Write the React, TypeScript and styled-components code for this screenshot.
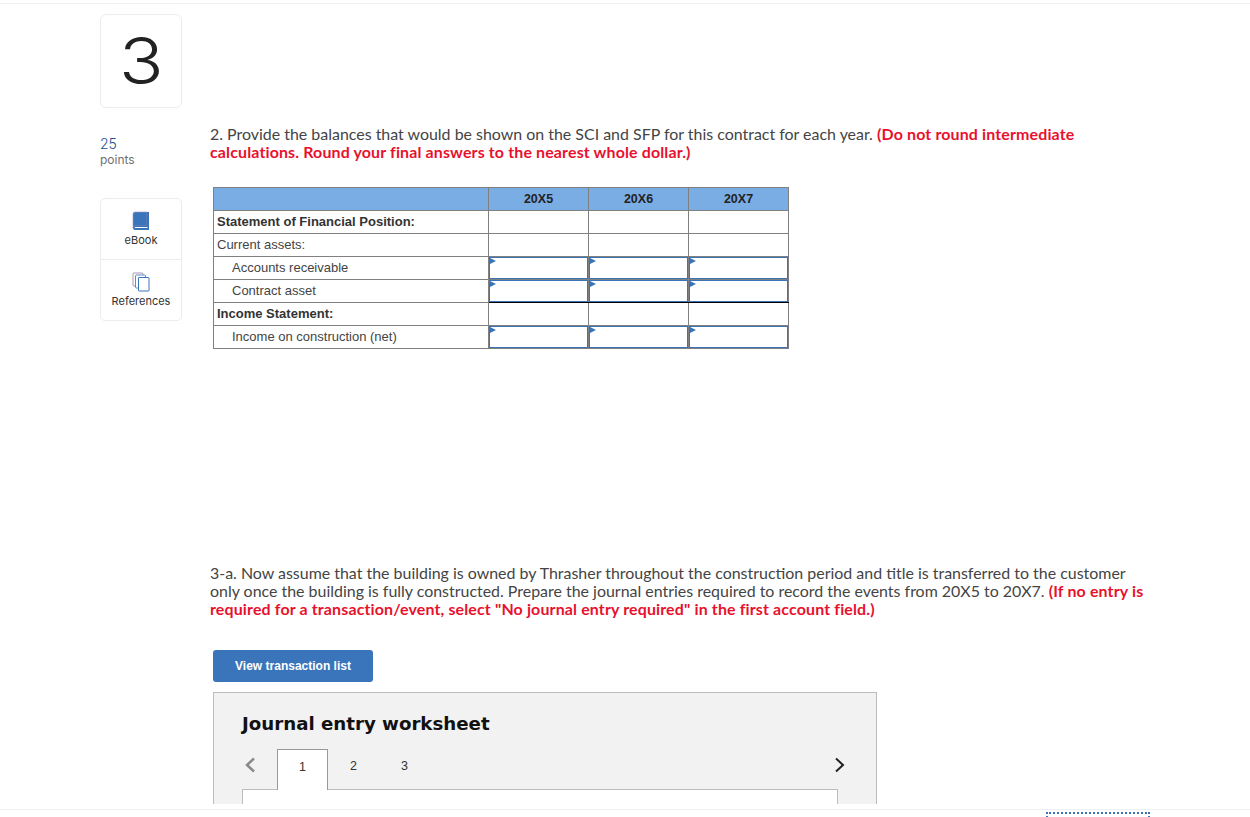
import styled, { createGlobalStyle } from "styled-components";

const GlobalStyle = createGlobalStyle`
  html, body {
    margin: 0;
    padding: 0;
    background: #fff;
    overflow: hidden;
  }
`;

const Page = styled.div`
  width: 1250px;
  height: 817px;
  display: flex;
  flex-direction: column;
  overflow: hidden;
  font-family: "Open Sans", sans-serif;
`;

const Main = styled.main`
  height: 800px;
  margin-top: 3px;
  border-top: 1px solid #f2f2f2;
  box-sizing: content-box;
  display: flex;
  padding-left: 100px;
  overflow: hidden;
`;

const Side = styled.aside`
  width: 82px;
  flex: none;
  padding-top: 10px;
`;

const NumberCard = styled.div`
  height: 90px;
  padding-bottom: 2px;
  border: 1px solid #ececec;
  border-radius: 6px;
  display: flex;
  align-items: center;
  justify-content: center;
  font-family: "Inter", sans-serif;
  font-weight: 300;
  font-size: 64px;
  color: #222;
`;

const NumberGlyph = styled.span`
  display: block;
  transform: scaleX(1.15);
`;

const Points = styled.div`
  margin-top: 28px;
  height: 34px;
  font-family: "Inter", sans-serif;
  font-size: 12px;
  line-height: 16px;
  color: #707070;
`;

const PointsValue = styled.div`
  font-size: 14px;
  font-weight: 300;
  color: #1f4e8c;
`;

const Tools = styled.div`
  margin-top: 28px;
  border: 1px solid #ececec;
  border-radius: 5px;
`;

const Tool = styled.div`
  height: 60px;
  display: flex;
  flex-direction: column;
  align-items: center;
  padding-top: 12px;
  box-sizing: border-box;
  font-family: "Inter", sans-serif;
  font-size: 11px;
  color: #333;
  & + & {
    height: 61px;
    border-top: 1px solid #ececec;
  }
  svg {
    display: block;
    margin-bottom: 2px;
  }
`;

const Content = styled.div`
  margin-left: 28px;
  width: 940px;
  padding-top: 121px;
`;

const Prompt = styled.p`
  margin: 0;
  font-family: "Lato", sans-serif;
  font-size: 15.95px;
  line-height: 18px;
  color: #444;
`;

const Strong = styled.strong`
  color: #e8112d;
  font-weight: 700;
  letter-spacing: 0.15px;
`;

const Inset = styled.div`
  margin-left: 3px;
`;

const Grid = styled.table`
  margin-top: 26px;
  width: 575px;
  table-layout: fixed;
  border-collapse: collapse;
  font-family: "Liberation Sans", sans-serif;
  color: #444;
`;

const HeadCell = styled.th`
  height: 22px;
  padding: 0;
  background: #7aade4;
  border: 1px solid #808080;
  font-size: 12.5px;
  font-weight: 700;
  color: #222;
`;

const LabelCell = styled.td<{ $indent?: boolean; $bold?: boolean }>`
  height: 22px;
  padding: 0 0 2px ${(p) => (p.$indent ? "18px" : "3px")};
  box-sizing: border-box;
  border: 1px solid #808080;
  font-size: 13px;
  font-weight: ${(p) => (p.$bold ? 700 : 400)};
  color: ${(p) => (p.$bold ? "#333" : "#444")};
  white-space: nowrap;
`;

const ValueCell = styled.td<{ $input?: boolean; $darkBottom?: boolean }>`
  position: relative;
  height: 22px;
  padding: 0;
  border: 1px solid #808080;
  ${(p) => p.$darkBottom && "border-bottom: 1px solid #000;"}
  ${(p) =>
    p.$input &&
    `
    box-shadow: inset 0 0 0 1px #3a74b8;
    &::before {
      content: "";
      position: absolute;
      top: 1px;
      left: 1px;
      border-left: 6px solid #3a74b8;
      border-top: 3px solid transparent;
      border-bottom: 3px solid transparent;
    }
  `}
`;

const SecondPrompt = styled(Prompt)`
  margin-top: 215px;
`;

const ListButton = styled.button`
  display: block;
  margin-top: 32px;
  width: 160px;
  height: 32px;
  padding: 0;
  border: none;
  border-radius: 3px;
  background: #3a75bb;
  color: #fff;
  font-family: "Liberation Sans", sans-serif;
  font-size: 12px;
  font-weight: 700;
`;

const Worksheet = styled.section`
  margin-top: 10px;
  width: 664px;
  height: 200px;
  box-sizing: border-box;
  border: 1px solid #bdbdbd;
  background: #f2f2f2;
  padding: 19px 38px 0 28px;
`;

const WorksheetTitle = styled.h2`
  margin: 0;
  font-family: "DejaVu Sans", sans-serif;
  font-size: 18.2px;
  line-height: 24px;
  font-weight: 700;
  color: #111;
`;

const TabRow = styled.div`
  margin-top: 13px;
  height: 40px;
  display: flex;
  align-items: stretch;
`;

const Arrow = styled.div`
  width: 35px;
  display: flex;
  align-items: center;
  padding: 0 0 9px 2px;
  box-sizing: border-box;
`;

const NextArrow = styled(Arrow)`
  margin-left: auto;
  width: 12px;
  padding-left: 0;
  margin-right: -8px;
`;

const Tab = styled.div<{ $active?: boolean }>`
  width: 51px;
  box-sizing: border-box;
  display: flex;
  align-items: center;
  justify-content: center;
  padding-bottom: 7px;
  font-family: "Liberation Sans", sans-serif;
  font-size: 12.5px;
  color: #333;
  ${(p) =>
    p.$active &&
    `
    position: relative;
    z-index: 1;
    background: #fff;
    border: 1px solid #999;
    border-bottom: none;
    height: 41px;
  `}
`;

const TabBody = styled.div`
  height: 60px;
  background: #fff;
  border: 1px solid #bdbdbd;
`;

const Footer = styled.footer`
  flex: 1;
  position: relative;
  margin-top: 5px;
  border-top: 1px solid #efefef;
`;

const FocusRing = styled.div`
  position: absolute;
  left: 1046px;
  top: 2px;
  width: 104px;
  height: 6px;
  border-top: 2px dotted #3a74b8;
  border-left: 2px dotted #3a74b8;
  border-right: 2px dotted #3a74b8;
  box-sizing: border-box;
`;

function BookIcon() {
  return (
    <svg width="18" height="20" viewBox="0 0 18 20">
      <path d="M1 3 Q1 1 3 1 H15 V15 H3 Q1 15 1 17 Z" fill="#3a75bb" stroke="#9b8fb5" strokeWidth="0.6" />
      <path d="M15 1 H17 V19 H3 Q1 19 1 17 Q1 15 3 15 H15 Z" fill="#3a75bb" />
      <path d="M3 16.5 H15.5" stroke="#fff" strokeWidth="1" />
    </svg>
  );
}

function PagesIcon() {
  return (
    <svg width="18" height="20" viewBox="0 0 18 20" fill="#fff">
      <rect x="1" y="1" width="10" height="13" rx="1" stroke="#a995b5" strokeWidth="1" />
      <rect x="3.5" y="3" width="10" height="13" rx="1" stroke="#5b8bc9" strokeWidth="1" />
      <rect x="6.5" y="5.5" width="10.5" height="13.5" rx="0.5" stroke="#3a75bb" strokeWidth="1" />
    </svg>
  );
}

function Chevron({ left, color }: { left?: boolean; color: string }) {
  return (
    <svg width="12" height="16" viewBox="0 0 12 16" fill="none" stroke={color} strokeWidth={left ? 2.5 : 2}>
      <path d={left ? "M10 1.5 L3 8 L10 14.5" : "M2 1.5 L9 8 L2 14.5"} />
    </svg>
  );
}

const rows = [
  { label: "Statement of Financial Position:", bold: true },
  { label: "Current assets:" },
  { label: "Accounts receivable", indent: true, input: true },
  { label: "Contract asset", indent: true, input: true, darkBottom: true },
  { label: "Income Statement:", bold: true },
  { label: "Income on construction (net)", indent: true, input: true },
];

const years = ["20X5", "20X6", "20X7"];

export default function App() {
  return (
    <Page>
      <GlobalStyle />
      <Main>
        <Side>
          <NumberCard>
            <NumberGlyph>3</NumberGlyph>
          </NumberCard>
          <Points>
            <PointsValue>25</PointsValue>
            points
          </Points>
          <Tools>
            <Tool>
              <BookIcon />
              eBook
            </Tool>
            <Tool>
              <PagesIcon />
              References
            </Tool>
          </Tools>
        </Side>
        <Content>
          <Prompt>
            2. Provide the balances that would be shown on the SCI and SFP for this contract for each year.{" "}
            <Strong>
              (Do not round intermediate calculations. Round your final answers to the nearest whole dollar.)
            </Strong>
          </Prompt>
          <Inset>
            <Grid>
              <colgroup>
                <col style={{ width: 275 }} />
                <col style={{ width: 100 }} />
                <col style={{ width: 100 }} />
                <col style={{ width: 100 }} />
              </colgroup>
              <thead>
                <tr>
                  <HeadCell />
                  {years.map((y) => (
                    <HeadCell key={y}>{y}</HeadCell>
                  ))}
                </tr>
              </thead>
              <tbody>
                {rows.map((r) => (
                  <tr key={r.label}>
                    <LabelCell $indent={r.indent} $bold={r.bold}>
                      {r.label}
                    </LabelCell>
                    {years.map((y) => (
                      <ValueCell key={y} $input={r.input} $darkBottom={r.darkBottom} />
                    ))}
                  </tr>
                ))}
              </tbody>
            </Grid>
          </Inset>
          <SecondPrompt>
            3-a. Now assume that the building is owned by Thrasher throughout the construction period and title is
            transferred to the customer only once the building is fully constructed. Prepare the journal entries
            required to record the events from 20X5 to 20X7.{" "}
            <Strong>
              (If no entry is required for a transaction/event, select "No journal entry required" in the first
              account field.)
            </Strong>
          </SecondPrompt>
          <Inset>
            <ListButton>View transaction list</ListButton>
            <Worksheet>
              <WorksheetTitle>Journal entry worksheet</WorksheetTitle>
              <TabRow>
                <Arrow>
                  <Chevron left color="#8a8a8a" />
                </Arrow>
                <Tab $active>1</Tab>
                <Tab>2</Tab>
                <Tab>3</Tab>
                <NextArrow>
                  <Chevron color="#222" />
                </NextArrow>
              </TabRow>
              <TabBody />
            </Worksheet>
          </Inset>
        </Content>
      </Main>
      <Footer>
        <FocusRing />
      </Footer>
    </Page>
  );
}
